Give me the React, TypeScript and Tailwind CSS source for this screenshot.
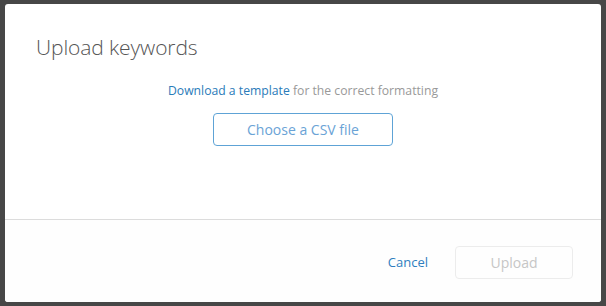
export default function App() {
  return (
    <div className="w-[606px] h-[306px] bg-[#474747] p-[4px_5px_4px_5px]" style={{ fontFamily: '"Open Sans", "Noto Sans", sans-serif' }}>
      <div className="w-[596px] h-[298px] bg-white rounded-[3px] flex flex-col overflow-hidden">
        <div className="h-[216px] border-b border-[#dcdcdc] flex flex-col">
          <h1 className="pl-[31px] pt-[29px] text-[21px] font-light text-[#555] leading-[28px] tracking-[-0.1px]">Upload keywords</h1>
          <p className="mt-[22px] text-center text-[12.2px] leading-[16px] text-[#999]">
            <span className="text-[#2a7bb9]">Download a template</span> for the correct formatting
          </p>
          <div className="mt-[14px] flex justify-center">
            <button className="w-[180px] h-[33px] border border-[#5ea3d6] rounded-[4px] text-[14px] text-[#6aa3d6]">Choose a CSV file</button>
          </div>
        </div>
        <div className="flex-1 bg-[#fefefe] flex items-center justify-end pr-[28px] pt-[3px] gap-[27px]">
          <span className="text-[13px] text-[#2f7fbf]">Cancel</span>
          <button className="w-[118px] h-[33px] border border-[#ececec] rounded-[4px] text-[14px] text-[#c6c6c6]">Upload</button>
        </div>
      </div>
    </div>
  );
}
